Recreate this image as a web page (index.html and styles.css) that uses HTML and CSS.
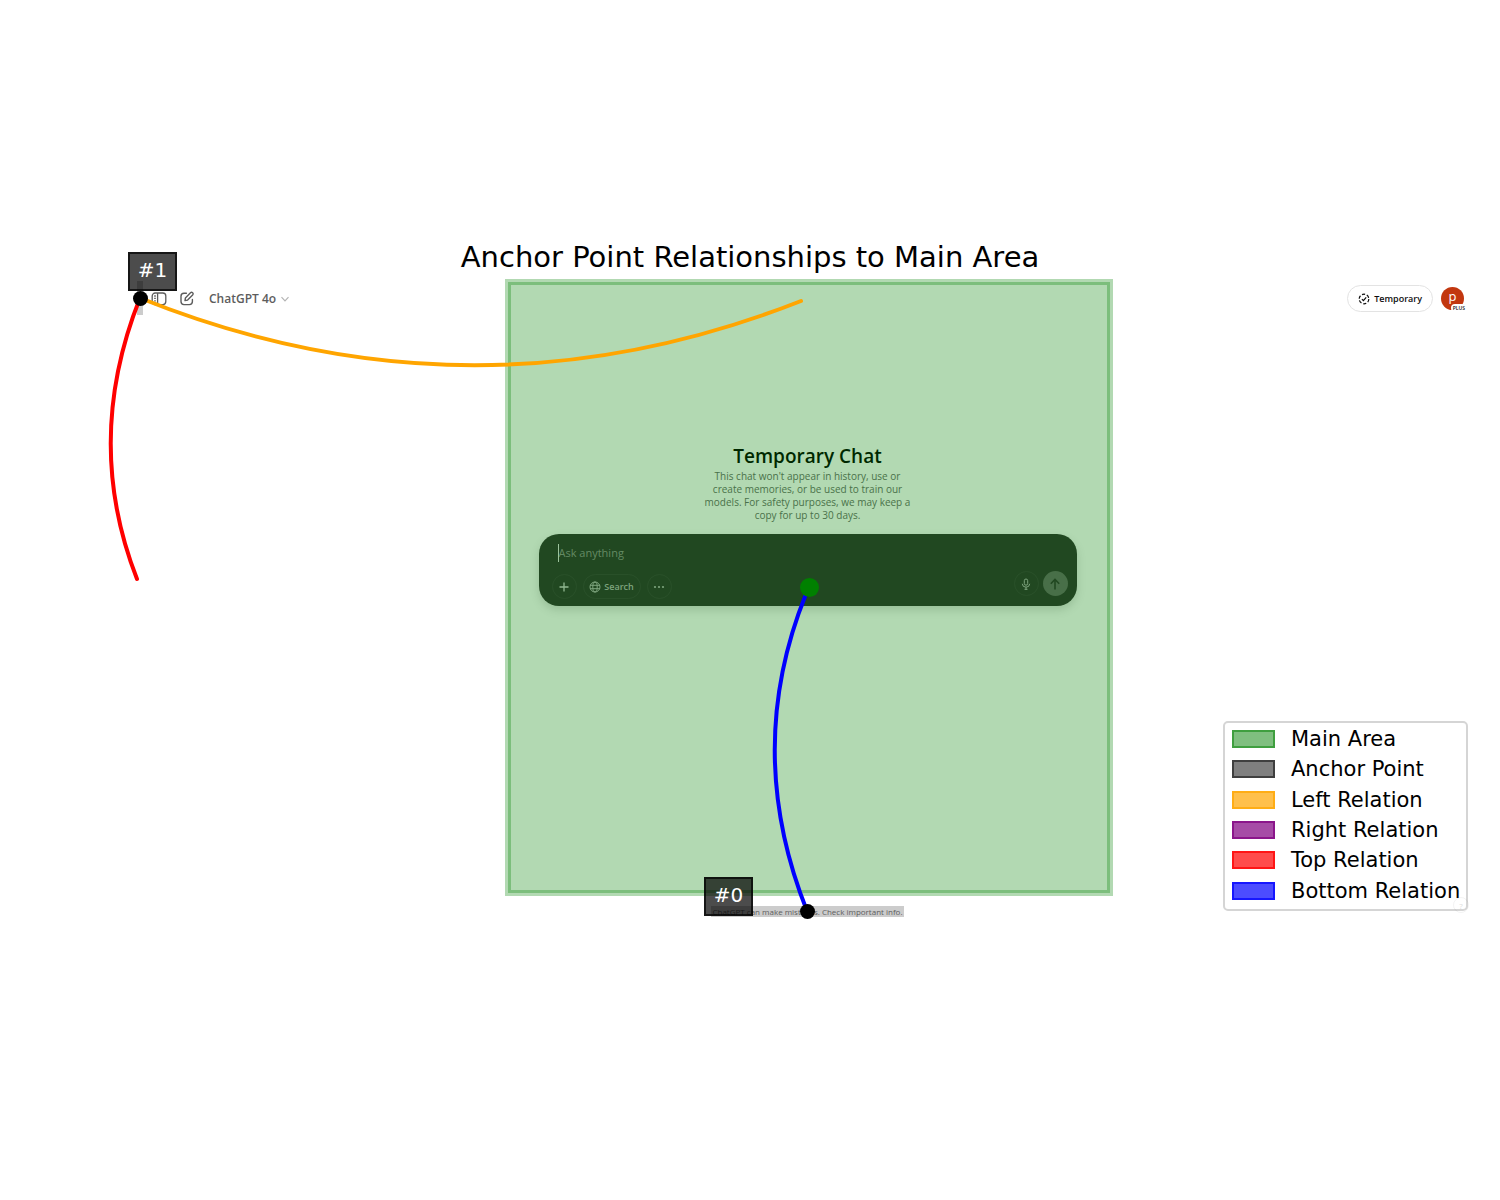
FILE: index.html
```html
<!DOCTYPE html>
<html lang="en">
<head>
<meta charset="utf-8">
<title>Anchor Point Relationships to Main Area</title>
<link rel="stylesheet" href="styles.css">
</head>
<body>
<h1 class="title">Anchor Point Relationships to Main Area</h1>
<div class="stage">
  <header class="topbar">
    <button class="icon-button" aria-label="Toggle sidebar">
      <svg width="16" height="16" viewBox="0 0 16 16" fill="none" stroke="currentColor" stroke-width="1.3"><rect x="1.2" y="2" width="13.6" height="11.6" rx="3"/><path d="M6.6 2v11.6M3.2 5h1.6M3.2 7.4h1.6M3.2 9.8h1.6"/></svg>
    </button>
    <button class="icon-button" aria-label="New chat">
      <svg width="16" height="16" viewBox="0 0 16 16" fill="none" stroke="currentColor" stroke-width="1.4" stroke-linejoin="round" stroke-linecap="round"><path d="M7.4 2.200H5Q2 2.200 2 5.200v5.400q0 3 3 3h5.400q3 0 3-3V8.400"/><path d="M6 9.600l.4-2.700L11.500 1.800q1-1 2.100 0t0 2.200L8.600 9.100z"/></svg>
    </button>
    <button class="model">ChatGPT 4o
      <svg width="10" height="10" viewBox="0 0 10 10" fill="none" stroke="#b4b4b4" stroke-width="1.200"><path d="M1.500 3.200 5 6.800 8.500 3.200"/></svg>
    </button>
    <button class="temporary">
      <svg width="12" height="12" viewBox="0 0 12 12" fill="none" stroke="currentColor" stroke-width="1.200"><circle cx="6" cy="6" r="4.800" stroke-dasharray="3.200 1.800"/><path d="M3.900 6.200 5.400 7.700 8.200 4.400"/></svg>
      Temporary
    </button>
    <div class="avatar">p<span class="plan">PLUS</span></div>
  </header>
  <main class="chat">
    <h2 class="chat-title">Temporary Chat</h2>
    <p class="chat-note">This chat won't appear in history, use or<br>create memories, or be used to train our<br>models. For safety purposes, we may keep a<br>copy for up to 30 days.</p>
    <form class="composer">
      <input class="prompt" type="text" placeholder="Ask anything" aria-label="Ask anything">
      <div class="tools">
        <button type="button" class="tool round" aria-label="Add"><svg width="12" height="12" viewBox="0 0 12 12" stroke="currentColor" stroke-width="1.300"><path d="M6 1.500v9M1.500 6h9"/></svg></button>
        <button type="button" class="tool search"><svg width="12" height="12" viewBox="0 0 12 12" fill="none" stroke="currentColor"><circle cx="6" cy="6" r="5"/><ellipse cx="6" cy="6" rx="2.200" ry="5"/><path d="M1 4.300h10M1 7.700h10"/></svg>Search</button>
        <button type="button" class="tool round more" aria-label="More"><svg width="12" height="12" viewBox="0 0 12 12" fill="currentColor"><circle cx="2" cy="6" r="1.100"/><circle cx="6" cy="6" r="1.100"/><circle cx="10" cy="6" r="1.100"/></svg></button>
        <div class="actions">
          <button type="button" class="tool round mic" aria-label="Dictate"><svg width="12" height="12" viewBox="0 0 12 12" fill="none" stroke="currentColor"><rect x="4.300" y="1" width="3.400" height="6.200" rx="1.700"/><path d="M2.300 5.800Q2.500 9.200 6 9.200T9.700 5.800M6 9.200v2.300M4.500 11.300h3"/></svg></button>
          <button type="button" class="tool round send" aria-label="Send"><svg width="14" height="14" viewBox="0 0 14 14" fill="none" stroke="currentColor" stroke-width="1.600"><path d="M7 12.500V2.500M2.800 6.700 7 2.500l4.200 4.200"/></svg></button>
        </div>
      </div>
    </form>
  </main>
  <footer class="disclaimer"><span>ChatGPT can make mistakes. Check important info.</span></footer>

  <div class="main-area"></div>
  <svg class="relations" viewBox="135 279 1345 636" fill="none" stroke-width="4" stroke-linecap="round">
    <rect x="137" y="281" width="6" height="34" fill="#000" fill-opacity=".2"/>
    <path stroke="orange" d="M140 298Q471 431 801 301"/>
    <path stroke="red" d="M140 298Q83 441 137 579"/>
    <path stroke="blue" d="M807 911Q743 750 806 594"/>
    <circle cx="809.500" cy="587.500" r="9.500" fill="green"/>
  </svg>
  <span class="tag tag-one">#1</span>
  <span class="tag tag-zero">#0</span>
  <svg class="relations" viewBox="135 279 1345 636">
    <circle cx="140.500" cy="298.500" r="7.500"/>
    <circle cx="807.500" cy="911.500" r="7.500"/>
  </svg>
  <ul class="legend">
    <li><i class="swatch main"></i>Main Area</li>
    <li><i class="swatch anchor"></i>Anchor Point</li>
    <li><i class="swatch left"></i>Left Relation</li>
    <li><i class="swatch right"></i>Right Relation</li>
    <li><i class="swatch top"></i>Top Relation</li>
    <li><i class="swatch bottom"></i>Bottom Relation</li>
  </ul>
  <button class="help" aria-label="Help">?</button>
</div>
</body>
</html>
```
FILE: styles.css
```css
* { box-sizing: border-box; }
body {
  min-height: 100vh;
  margin: 0;
  padding: 20vh 0 40px;
  background: #fff;
  color: #000;
  font-family: "Open Sans", "Noto Sans", sans-serif;
}
button {
  display: flex;
  align-items: center;
  padding: 0;
  border: 0;
  background: none;
  color: inherit;
  font: inherit;
}
svg { flex: none; }
.title {
  margin: 0;
  font: 29px/34px "DejaVu Sans", sans-serif;
  text-align: center;
}
.stage {
  position: relative;
  display: flex;
  flex-direction: column;
  min-height: 638px;
  margin: 5px 20px 0 9%;
}
.topbar {
  display: flex;
  align-items: center;
  height: 39px;
  padding: 0 16px;
  color: #5d5d5d;
}
.icon-button { margin-right: 12px; }
.model {
  gap: 4px;
  margin: 0 auto 0 2px;
  font-size: 12px;
  font-weight: 600;
}
.temporary {
  gap: 4px;
  height: 27px;
  margin-right: 8px;
  padding: 0 10px;
  border: 1px solid #e3e3e3;
  border-radius: 14px;
  color: #0d0d0d;
  font-size: 9px;
  font-weight: 600;
}
.avatar {
  position: relative;
  width: 23px;
  height: 23px;
  border-radius: 50%;
  background: #c2370f;
  color: #fff;
  font-size: 13px;
  line-height: 19px;
  text-align: center;
}
.plan {
  position: absolute;
  right: -3px;
  bottom: -2px;
  padding: 0 2px;
  border-radius: 4px;
  background: #fff;
  color: #0d0d0d;
  font-size: 5px;
  font-weight: 600;
  line-height: 8px;
}
.chat {
  flex: 1;
  display: flex;
  flex-direction: column;
  align-items: center;
  padding-top: 126px;
}
.chat-title {
  margin: 0;
  font-size: 19px;
  font-weight: 600;
  line-height: 24px;
}
.chat-note {
  margin: 2px 0 12px;
  color: #6b6b6b;
  font-size: 10px;
  line-height: 13px;
  text-align: center;
}
.composer {
  width: 40%;
  min-width: 400px;
  padding: 10px 9px 7px 13px;
  border-radius: 20px;
  background: #303030;
  box-shadow: 0 4px 10px rgba(0, 0, 0, .15);
}
.prompt {
  display: block;
  width: calc(100% - 6px);
  height: 18px;
  margin-left: 6px;
  padding: 0;
  border: 0;
  border-left: 1px solid #e0e0e0;
  outline: 0;
  background: none;
  color: #fff;
  font: 11px/18px "Open Sans", "Noto Sans", sans-serif;
}
.prompt::placeholder { color: #8f8f8f; opacity: 1; }
.tools {
  display: flex;
  align-items: flex-end;
  gap: 6px;
  height: 28px;
  margin-top: 9px;
  color: #cfcfcf;
}
.actions {
  display: flex;
  align-self: flex-start;
  gap: 4px;
}
.tool {
  justify-content: center;
  height: 25px;
  border: 1px solid #3c3c3c;
  border-radius: 13px;
}
.round { width: 25px; }
.search {
  gap: 3px;
  width: 58px;
  color: #b4b4b4;
  font-size: 9px;
  font-weight: 600;
}
.more { margin-right: auto; color: #b4b4b4; }
.mic { color: #b4b4b4; }
.send { border: 0; background: #676767; color: #303030; }
.disclaimer {
  display: flex;
  justify-content: center;
  color: #5d5d5d;
  font-size: 8px;
  line-height: 11px;
}
.disclaimer span {
  padding: 0 1px;
  background: rgba(0, 0, 0, .2);
}
.main-area {
  position: absolute;
  inset: 0 367px 21px 370px;
  background: rgba(0, 128, 0, .3);
}
.main-area::before {
  content: "";
  position: absolute;
  inset: 3px;
  border: 3px solid rgba(0, 128, 0, .3);
}
.relations {
  position: absolute;
  top: 0;
  left: 0;
  width: 100%;
  overflow: visible;
  pointer-events: none;
}
.tag {
  position: absolute;
  width: 49px;
  height: 39px;
  border: 2px solid rgba(0, 0, 0, .7);
  background: rgba(0, 0, 0, .7);
  color: #fff;
  font: 20px/32px "DejaVu Sans", sans-serif;
  text-align: center;
}
.tag-one { top: -27px; left: -7px; }
.tag-zero { bottom: 1px; left: 569px; }
.legend {
  position: absolute;
  right: 12px;
  bottom: 6px;
  display: grid;
  grid-auto-rows: 1fr;
  width: 245px;
  height: 190px;
  margin: 0;
  padding: 1px 7px 3px;
  border: 2px solid #d5d5d5;
  border-radius: 5px;
  background: rgba(255, 255, 255, .8);
  font: 21px/30px "DejaVu Sans", sans-serif;
  list-style: none;
  white-space: nowrap;
}
.legend li {
  display: flex;
  align-items: center;
  gap: 16px;
}
.swatch {
  flex: none;
  width: 43px;
  height: 18px;
  border: 2px solid;
}
.main { background: rgba(0, 128, 0, .5); border-color: rgba(0, 128, 0, .5); }
.anchor { background: rgba(0, 0, 0, .5); border-color: rgba(0, 0, 0, .5); }
.left { background: rgba(255, 165, 0, .7); border-color: rgba(255, 165, 0, .7); }
.right { background: rgba(128, 0, 128, .7); border-color: rgba(128, 0, 128, .7); }
.top { background: rgba(255, 0, 0, .7); border-color: rgba(255, 0, 0, .7); }
.bottom { background: rgba(0, 0, 255, .7); border-color: rgba(0, 0, 255, .7); }
.help {
  position: absolute;
  right: 11px;
  bottom: 4px;
  justify-content: center;
  width: 16px;
  height: 16px;
  border: 1px solid rgba(0, 0, 0, .05);
  border-radius: 50%;
  color: #e0e0e0;
  font-size: 8px;
}
```
